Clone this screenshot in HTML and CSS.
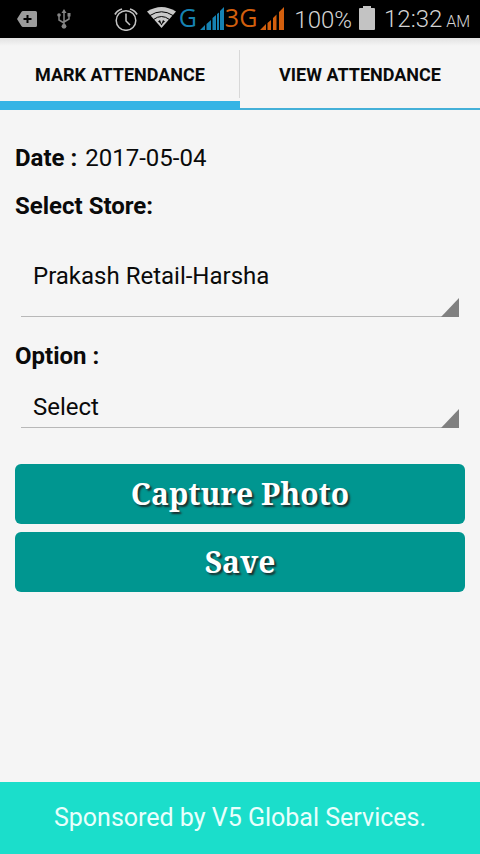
FILE: index.html
```html
<!DOCTYPE html>
<html lang="en">
<head>
<meta charset="utf-8">
<meta name="viewport" content="width=device-width, initial-scale=1">
<title>Mark Attendance</title>
<link rel="stylesheet" href="styles.css">
</head>
<body>
<header class="status">
  <div class="status-left">
    <svg class="icon-tag" width="20" height="16" viewBox="0 0 20 16" aria-hidden="true"><path fill="#9b9b9b" d="M6 0H18.500Q20 0 20 1.500V14.500Q20 16 18.500 16H6Q5 16 4.400 15L0 8L4.400 1Q5 0 6 0Z"/><path stroke="#000" stroke-width="2" d="M10.500 4V12M6.500 8H14.500"/></svg>
    <svg width="14" height="20" viewBox="0 0 14 20" fill="none" stroke="#858585" stroke-width="1.500" aria-hidden="true"><path d="M7 3V17M7 14L2 11V6M7 13L12 10V6"/><g fill="#858585" stroke="none"><path d="M7 0L9.500 4H4.500ZM10.500 4H13.500V7.500H10.500Z"/><circle cx="2" cy="6" r="1.800"/><circle cx="7" cy="17.300" r="2.400"/></g></svg>
  </div>
  <div class="status-right">
    <svg class="icon-alarm" width="24" height="23" viewBox="0 0 24 23" fill="none" stroke="#c4c4c4" aria-hidden="true"><circle cx="12" cy="12.500" r="9.800" stroke-width="1.500"/><path stroke-width="1.500" d="M12 5.500V13L16 17"/><path stroke-width="1.800" d="M1 6.500Q3 2.500 8 1M23 6.500Q21 2.500 16 1"/></svg>
    <svg class="icon-wifi" width="29" height="21" viewBox="0 0 29 21" aria-hidden="true"><path fill="#c8c8c8" d="M0 4.500Q14.500 -4.500 29 4.500L14.500 21Z"/><path fill="none" stroke="#000" stroke-width="1" d="M3 8.500Q14.500 1 26 8.500M6.500 12.500Q14.500 6.500 22.500 12.500"/><path fill="#000" d="M11 14.500L13 13L14.500 17L16 13L18 14.500L16 16L14.500 18.500L13 16Z"/></svg>
    <span class="net net-g">G</span>
    <svg class="bars" width="24" height="23" viewBox="0 0 24 23" fill="#1682b2" aria-hidden="true"><path d="M0 23L5 18V23ZM6.500 17L11 13V23H6.500ZM12.500 11L16 8V23H12.500ZM17 7L19 5.500V23H17ZM20 4L24 0V23H20Z"/></svg>
    <span class="net net-3g">3G</span>
    <svg class="bars" width="24" height="23" viewBox="0 0 24 23" fill="#d35f0d" aria-hidden="true"><path d="M0 23L6 17V23ZM7.500 16L11 13V23H7.500ZM13 11L16.500 7.500V23H13ZM19 5L24 0V23H19Z"/></svg>
    <span class="percent">100%</span>
    <svg class="battery" width="16" height="24" viewBox="0 0 16 24" fill="#c3c3c3" aria-hidden="true"><path d="M4 0H12V2H15Q16 2 16 3V23Q16 24 15 24H1Q0 24 0 23V3Q0 2 1 2H4Z"/></svg>
    <span class="clock">12:32 <small>AM</small></span>
  </div>
</header>
<nav class="tabs">
  <a class="tab tab-active" href="#mark" aria-current="page">MARK ATTENDANCE</a>
  <a class="tab" href="#view">VIEW ATTENDANCE</a>
</nav>
<main id="mark">
  <form class="form">
    <p class="line"><strong>Date :</strong><span>2017-05-04</span></p>
    <label class="line" for="store">Select Store:</label>
    <div class="spinner spinner-tall"><select id="store"><option>Prakash Retail-Harsha</option></select></div>
    <label class="line line-option" for="option">Option :</label>
    <div class="spinner"><select id="option"><option>Select</option></select></div>
    <div class="actions">
      <button type="button">Capture Photo</button>
      <button type="button">Save</button>
    </div>
  </form>
</main>
<footer class="sponsor">Sponsored by V5 Global Services.</footer>
</body>
</html>
```

FILE: styles.css
```css
* { box-sizing: border-box; }

body {
  margin: 0;
  min-height: 100vh;
  display: flex;
  flex-direction: column;
  background: #f5f5f5;
  color: #0a0a0a;
  font-family: Roboto, "Liberation Sans", sans-serif;
  font-size: 24px;
}

.status {
  display: flex;
  justify-content: space-between;
  height: 38px;
  padding: 0 10px 0 17px;
  background: #000;
  color: #d4d4d4;
  line-height: 38px;
  white-space: nowrap;
}

.status-left,
.status-right { display: flex; align-items: center; }
.status-left { gap: 20px; }
.icon-wifi { margin: 0 3px 4px 9px; }
.net { margin-bottom: 4px; font-family: "Open Sans", Roboto, sans-serif; font-size: 25px; line-height: 34px; }
.net-g { color: #1682b2; margin-right: 3px; }
.net-3g { color: #d35f0d; margin-right: 3px; margin-left: 1px; }
.bars { margin-bottom: 2px; }
.percent { margin: 2px 7px 0 10px; font-weight: 300; }
.battery { margin-bottom: 2px; }
.clock { margin: 2px 0 0 9px; font-weight: 300; }
.clock small { font-size: 16px; margin-left: -2px; }

.tabs {
  display: grid;
  grid-template-columns: 1fr 1fr;
  background: linear-gradient(#e2e2e2, #f5f5f5 8px);
}

.tab {
  position: relative;
  height: 72px;
  border-bottom: 2px solid #44b0d8;
  color: #0a0a0a;
  font-size: 18px;
  font-weight: bold;
  line-height: 74px;
  text-align: center;
  text-decoration: none;
}

.tab-active { border-bottom: 9px solid #35b4e5; }

.tab-active::after {
  content: "";
  position: absolute;
  top: 12px;
  right: 0;
  width: 1px;
  height: 48px;
  background: #d8d8d8;
}

main { flex: 1; }
.form { padding: 24px 15px; }

.line {
  display: flex;
  gap: 8px;
  margin: 0;
  line-height: 48px;
}

label.line { font-weight: bold; }
strong { font-weight: bold; }
.line-option { margin-top: 15px; }

.spinner {
  position: relative;
  margin: 0 6px;
  border-bottom: 1px solid #b8b8b8;
}

.spinner::after {
  content: "";
  position: absolute;
  right: 0;
  bottom: -1px;
  width: 18px;
  height: 19px;
  background: #808080;
  clip-path: polygon(100% 0, 100% 100%, 0 100%);
  pointer-events: none;
}

.spinner select {
  display: block;
  width: 100%;
  height: 47px;
  padding: 6px 12px 0;
  border: 0;
  appearance: none;
  background: transparent;
  color: inherit;
  font: inherit;
}

.spinner-tall select { height: 86px; }

.actions {
  display: grid;
  gap: 8px;
  margin-top: 36px;
}

.actions button {
  height: 60px;
  padding: 0 0 2px;
  border: 0;
  border-radius: 6px;
  background: #009690;
  color: #fff;
  font-family: "Noto Serif", "Droid Serif", "DejaVu Serif Condensed", "DejaVu Serif", serif;
  font-size: 30px;
  font-weight: bold;
  text-shadow: 2px 2px 2px #1c2c2c;
}

.sponsor {
  padding: 0 16px;
  background: #1bdecb;
  color: #e9fffc;
  font-size: 25px;
  line-height: 72px;
  text-align: center;
}
```
